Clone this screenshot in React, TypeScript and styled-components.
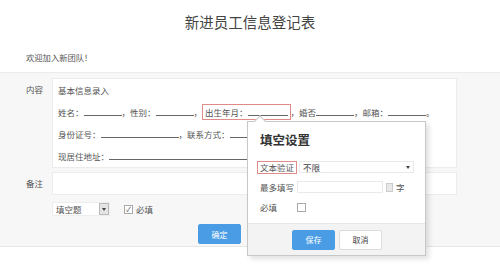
import styled, { createGlobalStyle } from 'styled-components';

const GlobalStyle = createGlobalStyle`
  html, body {
    margin: 0;
    background: #fff;
  }
  body {
    font-family: "Noto Sans CJK SC", "Noto Sans", sans-serif;
    color: #444;
    width: 500px;
    height: 267px;
    overflow: hidden;
  }
`;

const Page = styled.div`
  width: 500px;
`;

const Title = styled.h1`
  margin: 0;
  height: 44px;
  line-height: 44px;
  text-align: center;
  font-size: 14.5px;
  font-weight: 400;
  color: #444;
`;

const Welcome = styled.div`
  margin-top: 5px;
  padding-left: 26px;
  line-height: 16px;
  font-size: 8.3px;
  color: #555;
`;

const Panel = styled.div`
  position: relative;
  margin-top: 7px;
  background: #f7f7f7;
  border-top: 1px solid #ececec;
  border-bottom: 1px solid #e6e6e6;
  padding: 5px 0 2px;
  display: grid;
  grid-template-columns: 52px 405px;
  grid-auto-rows: auto;
  row-gap: 4px;
  font-size: 8.5px;
`;

const Label = styled.div`
  text-align: right;
  padding-right: 9px;
  line-height: 22px;
  color: #555;
`;

const Box = styled.div<{ $h?: number }>`
  background: #fff;
  border: 1px solid #ececec;
  padding-left: 5px;
  min-height: ${(p) => p.$h ?? 21}px;
  color: #555;
`;

const Line = styled.div`
  line-height: 22px;
  height: 22px;
  white-space: nowrap;
`;

const Blank = styled.span<{ $w: number }>`
  display: inline-block;
  width: ${(p) => p.$w}px;
  height: 8px;
  border-bottom: 1px solid #666;
`;

const Picked = styled.span`
  display: inline-block;
  line-height: 14px;
  padding: 0 2px 0 2px;
  border: 1px solid #e08a8a;
`;

const Controls = styled.div`
  grid-column: 2;
  display: flex;
  align-items: center;
  gap: 14px;
  margin-top: 3px;
`;

const Select = styled.div`
  width: 58px;
  height: 14px;
  background: #fff;
  border: 1px solid #eee;
  display: flex;
  align-items: center;
  justify-content: space-between;
  padding-left: 3px;
  box-sizing: border-box;
  color: #555;
`;

const Caret = styled.span`
  width: 10px;
  height: 12px;
  background: #e4e4e4;
  border: 1px solid #bbb;
  box-sizing: border-box;
  display: flex;
  align-items: center;
  justify-content: center;
  &::after {
    content: '';
    border-left: 2px solid transparent;
    border-right: 2px solid transparent;
    border-top: 3px solid #444;
  }
`;

const Check = styled.label`
  display: flex;
  align-items: center;
  gap: 3px;
  color: #555;
`;

const Tick = styled.span`
  width: 7px;
  height: 7px;
  border: 1px solid #aaa;
  background: #fff;
  display: inline-flex;
  align-items: center;
  justify-content: center;
  font-size: 7px;
  line-height: 1;
  color: #555;
`;

const Actions = styled.div`
  grid-column: 2;
  display: flex;
  gap: 6px;
  padding-left: 146px;
  margin-top: 4px;
`;

const Button = styled.button<{ $primary?: boolean }>`
  width: 43px;
  height: 20px;
  border-radius: 2px;
  border: 1px solid ${(p) => (p.$primary ? '#4a9de4' : '#ddd')};
  background: ${(p) => (p.$primary ? '#4a9de4' : '#fff')};
  color: ${(p) => (p.$primary ? '#fff' : '#444')};
  font-family: inherit;
  font-size: 8px;
  padding: 0;
`;

const Popup = styled.div`
  position: absolute;
  left: 247px;
  top: 48px;
  width: 177px;
  background: #fff;
  border: 1px solid #c8c8c8;
  box-shadow: 3px 3px 5px rgba(0, 0, 0, 0.12);
  &::before {
    content: '';
    position: absolute;
    left: 8px;
    top: -5px;
    width: 7px;
    height: 7px;
    background: #fff;
    border-left: 1px solid #c8c8c8;
    border-top: 1px solid #c8c8c8;
    transform: rotate(45deg);
  }
`;

const PopTitle = styled.div`
  padding: 9px 0 0 12px;
  font-size: 12.5px;
  font-weight: 700;
  color: #333;
  line-height: 18px;
`;

const PopRow = styled.div`
  display: flex;
  align-items: center;
  height: 20px;
  padding-left: 12px;
  color: #555;
`;

const PopLabel = styled.span<{ $w?: number }>`
  width: ${(p) => p.$w ?? 37}px;
`;

const Boxed = styled.span`
  border: 1px solid #e08a8a;
  padding: 0 2px;
  line-height: 11px;
  margin-left: -3px;
  margin-right: 2px;
`;

const Field = styled.div<{ $w: number }>`
  width: ${(p) => p.$w}px;
  height: 12px;
  border: 1px solid #eaeaea;
  box-sizing: border-box;
  display: flex;
  align-items: center;
  justify-content: space-between;
  padding: 0 3px;
  color: #444;
  &.sel::after {
    content: '';
    border-left: 2px solid transparent;
    border-right: 2px solid transparent;
    border-top: 3px solid #444;
  }
`;

const Spin = styled.span`
  width: 7px;
  height: 9px;
  margin: 0 3px 0 3px;
  background: #e8e8e8;
  border: 1px solid #ccc;
  box-sizing: border-box;
`;

const PopFoot = styled.div`
  margin-top: 6px;
  background: #f3f3f3;
  border-top: 1px solid #e6e6e6;
  height: 31px;
  display: flex;
  align-items: center;
  gap: 4px;
  padding-left: 44px;
`;

export default function App() {
  return (
    <Page>
      <GlobalStyle />
      <Title>新进员工信息登记表</Title>
      <Welcome>欢迎加入新团队！</Welcome>
      <Panel>
        <Label>内容</Label>
        <Box $h={86}>
          <Line>基本信息录入</Line>
          <Line>
            姓名：<Blank $w={38} />，性别：<Blank $w={38} />，
            <Picked>
              出生年月：<Blank $w={40} />
            </Picked>
            ，婚否<Blank $w={38} />，邮箱：<Blank $w={38} />。
          </Line>
          <Line>
            身份证号：<Blank $w={78} />，联系方式：<Blank $w={80} />
          </Line>
          <Line>
            现居住地址：<Blank $w={230} />
          </Line>
        </Box>
        <Label>备注</Label>
        <Box $h={21} />
        <Controls>
          <Select>
            填空题
            <Caret />
          </Select>
          <Check>
            <Tick>✓</Tick>必填
          </Check>
        </Controls>
        <Actions>
          <Button $primary>确定</Button>
          <Button>取消</Button>
        </Actions>

        <Popup>
          <PopTitle>填空设置</PopTitle>
          <PopRow style={{ marginTop: 8 }}>
            <Boxed>文本验证</Boxed>
            <Field $w={115} className="sel">
              不限
            </Field>
          </PopRow>
          <PopRow>
            <PopLabel>最多填写</PopLabel>
            <Field $w={86} />
            <Spin />字
          </PopRow>
          <PopRow>
            <PopLabel>必填</PopLabel>
            <Tick />
          </PopRow>
          <PopFoot>
            <Button $primary>保存</Button>
            <Button>取消</Button>
          </PopFoot>
        </Popup>
      </Panel>
    </Page>
  );
}
